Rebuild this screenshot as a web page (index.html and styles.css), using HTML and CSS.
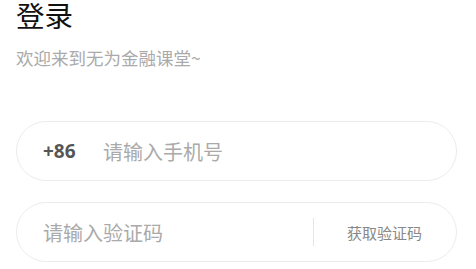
FILE: index.html
```html
<!DOCTYPE html>
<html lang="zh-CN">
<head>
<meta charset="utf-8">
<title>登录</title>
<link rel="stylesheet" href="styles.css">
</head>
<body>
<main class="page">
  <h1 class="title">登录</h1>
  <p class="subtitle">欢迎来到无为金融课堂~</p>
  <form class="form">
    <div class="field">
      <span class="prefix">+86</span>
      <input class="input" type="tel" placeholder="请输入手机号">
    </div>
    <div class="field">
      <input class="input" type="text" placeholder="请输入验证码">
      <span class="divider"></span>
      <button class="code-btn" type="button">获取验证码</button>
    </div>
  </form>
</main>
</body>
</html>
```
FILE: styles.css
```css
* { box-sizing: border-box; }
html, body { margin: 0; padding: 0; background: #fff; }
body {
  font-family: "Noto Sans", "Noto Sans CJK SC", sans-serif;
}
.page {
  padding: 0 19px 0 16px;
}
.title {
  margin: 0;
  font-size: 28.5px;
  line-height: 30px;
  font-weight: 400;
  color: #111;
  font-family: "Noto Sans CJK SC", sans-serif;
}
.subtitle {
  margin: 16px 0 0;
  font-size: 17.5px;
  line-height: 24px;
  color: #aaa;
  font-family: "Noto Sans CJK SC", sans-serif;
}
.form {
  margin-top: 51px;
  display: flex;
  flex-direction: column;
  gap: 21px;
}
.field {
  height: 60px;
  border: 1px solid #ececec;
  border-radius: 30px;
  display: flex;
  align-items: center;
  padding: 0 0 0 26px;
}
.prefix {
  font-size: 19px;
  font-weight: 700;
  color: #555;
  width: 60px;
  flex: none;
}
.input {
  flex: 1;
  min-width: 0;
  border: none;
  outline: none;
  background: transparent;
  font-family: "Noto Sans CJK SC", sans-serif;
  font-size: 20px;
  color: #333;
  padding: 0;
}
.input::placeholder { color: #aaa; }
.divider {
  width: 1px;
  height: 28px;
  background: #e6e6e6;
  flex: none;
}
.code-btn {
  flex: none;
  border: none;
  background: transparent;
  font-family: "Noto Sans CJK SC", sans-serif;
  font-size: 15px;
  color: #888;
  padding: 0 34px 0 33px;
}
```
